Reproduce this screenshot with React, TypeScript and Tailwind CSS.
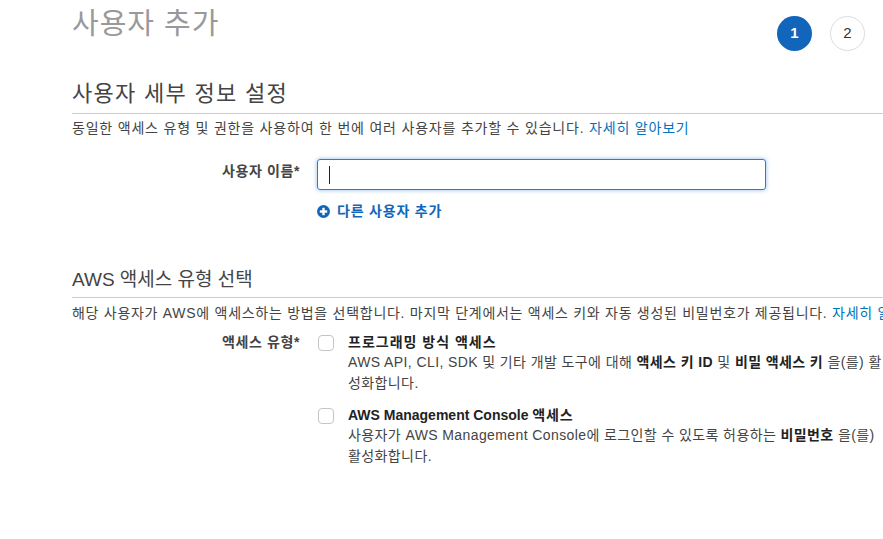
import React from "react";

const font = { fontFamily: '"Liberation Sans", "Noto Sans CJK KR", sans-serif' };

function PlusCircle() {
  return (
    <svg width="13" height="13" viewBox="0 0 13 13" className="shrink-0">
      <circle cx="6.5" cy="6.5" r="6.5" fill="#1166bb" />
      <rect x="5.3" y="2.8" width="2.4" height="7.4" fill="#fff" />
      <rect x="2.8" y="5.3" width="7.4" height="2.4" fill="#fff" />
    </svg>
  );
}

function Option({ title, children }: { title: React.ReactNode; children: React.ReactNode }) {
  return (
    <div className="flex">
      <div className="mt-[3px] ml-px h-[16px] w-[16px] shrink-0 rounded-[4px] border border-[#c4c4c4] bg-white" />
      <div className="ml-[14px] w-[542px]">
        <div className="text-[14px] font-bold leading-[20px] text-[#222]">{title}</div>
        <div className="text-[14px] leading-[21px] tracking-[0.4px] text-[#444]">{children}</div>
      </div>
    </div>
  );
}

export default function App() {
  return (
    <div className="h-[539px] w-[883px] overflow-hidden bg-white" style={font}>
      <div className="w-[1100px] pl-[72px]">
        {/* title row */}
        <div className="flex h-[52px]">
          <div className="w-[705px] pt-[6px] text-[29px] leading-[36px] tracking-[1px] text-[#999]">사용자 추가</div>
          <div className="flex gap-[18px] pt-[16px]">
            <div className="flex h-[35px] w-[35px] items-center justify-center rounded-full bg-[#1166bb] text-[15px] font-bold text-white">1</div>
            <div className="flex h-[35px] w-[35px] items-center justify-center rounded-full border border-[#dddddd] text-[15px] text-[#333]">2</div>
            <div className="flex h-[35px] w-[35px] items-center justify-center rounded-full border border-[#dddddd] text-[15px] text-[#333]"></div>
          </div>
        </div>

        {/* section 1 */}
        <div className="mt-[28px] border-b border-[#cccccc] pb-[5px] text-[22px] leading-[28px] tracking-[1.3px] text-[#444]">사용자 세부 정보 설정</div>
        <div className="mt-[4px] text-[14px] leading-[20px] tracking-[0.8px] text-[#444]">
          동일한 액세스 유형 및 권한을 사용하여 한 번에 여러 사용자를 추가할 수 있습니다. <span className="text-[#0073bb]">자세히 알아보기</span>
        </div>

        <div className="mt-[21px] flex">
          <div className="w-[228px] pt-[2px] text-right text-[14px] font-bold leading-[20px] tracking-[0.6px] text-[#444]">사용자 이름*</div>
          <div className="ml-[17px] flex h-[31px] w-[449px] items-center rounded-[3px] border border-[#2d7bd5] pl-[11px] shadow-[0_0_4px_rgba(45,123,213,0.55)]">
            <span className="block h-[18px] w-px bg-[#222]" />
          </div>
        </div>

        <div className="mt-[11px] flex items-center gap-[7px] pl-[245px] text-[14px] font-bold leading-[20px] tracking-[0.8px] text-[#1166bb]">
          <PlusCircle />
          <span>다른 사용자 추가</span>
        </div>

        {/* section 2 */}
        <div className="mt-[47px] border-b border-[#cccccc] pb-[5px] text-[19px] leading-[24px] text-[#444]">AWS 액세스 유형 선택</div>
        <div className="mt-[5px] whitespace-nowrap text-[14px] leading-[20px] tracking-[0.72px] text-[#444]">
          해당 사용자가 AWS에 액세스하는 방법을 선택합니다. 마지막 단계에서는 액세스 키와 자동 생성된 비밀번호가 제공됩니다. <span className="text-[#0073bb]">자세히 알아보기</span>
        </div>

        <div className="mt-[9px] flex">
          <div className="w-[228px] text-right text-[14px] font-bold leading-[20px] tracking-[0.6px] text-[#444]">액세스 유형*</div>
          <div className="ml-[17px] flex flex-col gap-[11px]">
            <Option title={<span className="tracking-[1px]">프로그래밍 방식 액세스</span>}>
              AWS API, CLI, SDK 및 기타 개발 도구에 대해 <b className="text-[#222]">액세스 키 ID</b> 및 <b className="text-[#222]">비밀 액세스 키</b> 을(를) 활성화합니다.
            </Option>
            <Option title={<>AWS Management Console <span className="tracking-[0.8px]">액세스</span></>}>
              사용자가 AWS Management Console에 로그인할 수 있도록 허용하는 <b className="text-[#222]">비밀번호</b> 을(를) 활성화합니다.
            </Option>
          </div>
        </div>
      </div>
    </div>
  );
}
